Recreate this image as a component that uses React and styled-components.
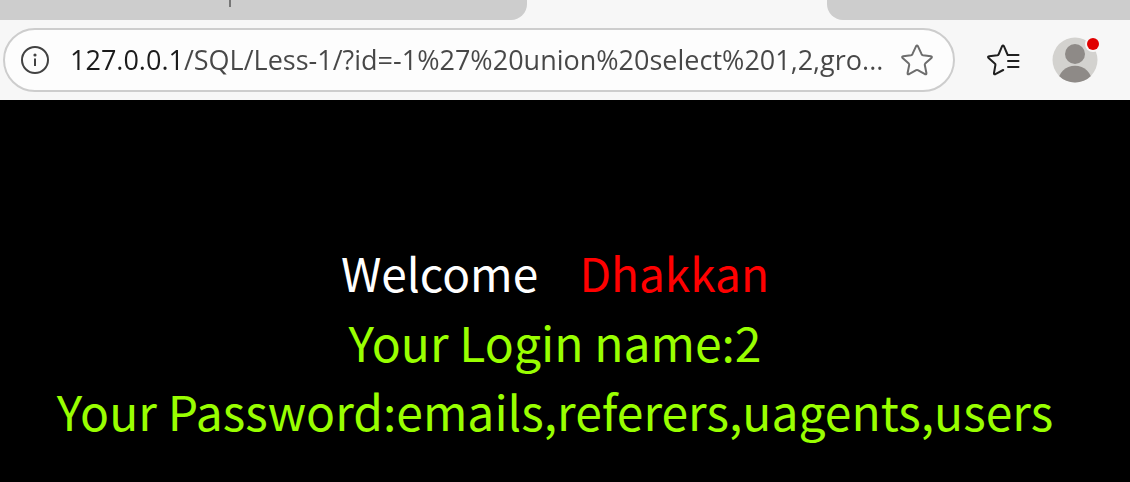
import React, { useState } from 'react'
import styled, { createGlobalStyle } from 'styled-components'

const GlobalStyle = createGlobalStyle`
  * {
    box-sizing: border-box;
  }

  body {
    margin: 0;
    background: #000;
  }
`

const Browser = styled.div`
  display: flex;
  flex-direction: column;
  min-height: 100vh;
`

const TabStrip = styled.div`
  display: flex;
  height: 20px;
  background: #f7f7f7;
`

const TabsBefore = styled.div`
  flex: 1;
  background: #cdcdcd;
  border-radius: 0 0 16px 0;
`

const TabsAfter = styled.div`
  width: 303px;
  background: #cdcdcd;
  border-radius: 0 0 0 16px;
`

const InactiveTab = styled.div`
  width: 231px;
  height: 7px;
  border-right: 2px solid #767676;
`

const ActiveTab = styled.div`
  width: 300px;
`

const Toolbar = styled.header`
  display: flex;
  align-items: center;
  height: 80px;
  padding: 0 31px 0 3px;
  background: #f7f7f7;
`

const AddressBar = styled.div`
  display: flex;
  flex: 1;
  align-items: center;
  min-width: 0;
  height: 64px;
  padding: 0 18px 0 16px;
  background: #fdfdfd;
  border: 2px solid #cdcdcd;
  border-radius: 32px;
`

const IconButton = styled.button`
  display: flex;
  flex: none;
  padding: 0;
  background: none;
  border: none;
  color: ${({ $color }) => $color || '#202020'};
  cursor: pointer;
`

const Url = styled.input`
  flex: 1;
  min-width: 0;
  margin: 0 10px 0 21px;
  padding: 0;
  border: none;
  outline: none;
  font-family: 'Open Sans', 'Noto Sans', sans-serif;
  font-size: 27px;
  line-height: 40px;
  text-overflow: ellipsis;
  /* host part is darker than the path */
  color: transparent;
  background: linear-gradient(to right, #1b1b1b 114px, #474747 114px);
  background-clip: text;
  -webkit-background-clip: text;
  caret-color: #1b1b1b;
`

const Actions = styled.div`
  display: flex;
  align-items: center;
  gap: 30px;
  margin-left: 30px;
`

const Page = styled.main`
  flex: 1;
  padding: 138px 20px 0 0;
  background: #000;
  color: #99ff00;
  font-family: 'Noto Sans CJK SC', sans-serif;
  font-size: 48px;
  line-height: 69px;
  text-align: center;
`

const Line = styled.div`
  white-space: pre;
`

const Welcome = styled(Line)`
  color: #fff;
  font-size: 46px;
`

const Name = styled.span`
  color: #ff0000;
`

const InfoIcon = () => (
  <svg width='28' height='28' viewBox='0 0 28 28' fill='none' aria-hidden='true'>
    <circle cx='14' cy='14' r='13' stroke='currentColor' strokeWidth='2' />
    <circle cx='14' cy='9' r='1.6' fill='currentColor' />
    <path d='M14 12.5v7.5' stroke='currentColor' strokeWidth='2' />
  </svg>
)

const StarIcon = () => (
  <svg
    width='36'
    height='36'
    viewBox='0 0 36 36'
    fill='none'
    stroke='currentColor'
    strokeWidth='2'
    strokeLinejoin='round'
    aria-hidden='true'
  >
    <path d='M17 4.4Q18 2.8 19 4.4L22.6 12.2Q23 13 24 13.2L31.8 14.2Q33.6 14.6 32.4 16L26.2 21.6Q25.6 22.2 25.8 23L27.4 31Q27.6 32.8 26 32.2L18.8 28.2Q18 27.8 17.2 28.2L10 32.2Q8.4 32.8 8.6 31L10.2 23Q10.4 22.2 9.8 21.6L3.6 16Q2.4 14.6 4.2 14.2L12 13.2Q13 13 13.4 12.2Z' />
  </svg>
)

const FavoritesIcon = () => (
  <svg
    width='36'
    height='36'
    viewBox='0 0 36 36'
    fill='none'
    stroke='currentColor'
    strokeWidth='2'
    strokeLinecap='round'
    strokeLinejoin='round'
    aria-hidden='true'
  >
    <path d='M33.5 13H22.7L19 4.4Q18 2.8 17 4.4L13.8 12Q13.4 13 12.4 13.2L4.2 14.2Q2.2 14.6 3.6 16L9.8 21.6Q10.6 22.2 10.4 23L9 31Q8.8 32.8 10.4 32.2L18.2 28' />
    <path d='M23 19H33.5M23 25H33.5' />
  </svg>
)

const ProfileIcon = () => (
  <svg width='48' height='48' viewBox='0 0 48 48' aria-hidden='true'>
    <clipPath id='avatar'>
      <circle cx='24' cy='24' r='22.5' />
    </clipPath>
    <circle cx='24' cy='24' r='22.5' fill='#d3d2cf' />
    <g clipPath='url(#avatar)' fill='#8e8a87'>
      <circle cx='24' cy='18' r='10' />
      <circle cx='24' cy='47' r='17.3' />
    </g>
    <circle cx='42' cy='8' r='8' fill='#f7f7f7' />
    <circle cx='42' cy='8' r='6' fill='#e00000' />
  </svg>
)

const App = () => {
  const [url, setUrl] = useState(
    '127.0.0.1/SQL/Less-1/?id=-1%27%20union%20select%201,2,gro...'
  )

  return (
    <Browser>
      <GlobalStyle />
      <TabStrip>
        <TabsBefore>
          <InactiveTab />
        </TabsBefore>
        <ActiveTab />
        <TabsAfter />
      </TabStrip>

      <Toolbar>
        <AddressBar>
          <IconButton aria-label='View site information' $color='#424242'>
            <InfoIcon />
          </IconButton>
          <Url
            type='text'
            aria-label='Address'
            spellCheck={false}
            value={url}
            onChange={(e) => setUrl(e.target.value)}
          />
          <IconButton aria-label='Add to favorites' $color='#6e6e6e'>
            <StarIcon />
          </IconButton>
        </AddressBar>
        <Actions>
          <IconButton aria-label='Favorites'>
            <FavoritesIcon />
          </IconButton>
          <IconButton aria-label='Profile'>
            <ProfileIcon />
          </IconButton>
        </Actions>
      </Toolbar>

      <Page>
        <Welcome>
          Welcome{'\u00a0\u00a0\u00a0\u00a0'}
          <Name>Dhakkan</Name>
        </Welcome>
        <Line>Your Login name:2</Line>
        <Line>Your Password:emails,referers,uagents,users</Line>
      </Page>
    </Browser>
  )
}

export default App
